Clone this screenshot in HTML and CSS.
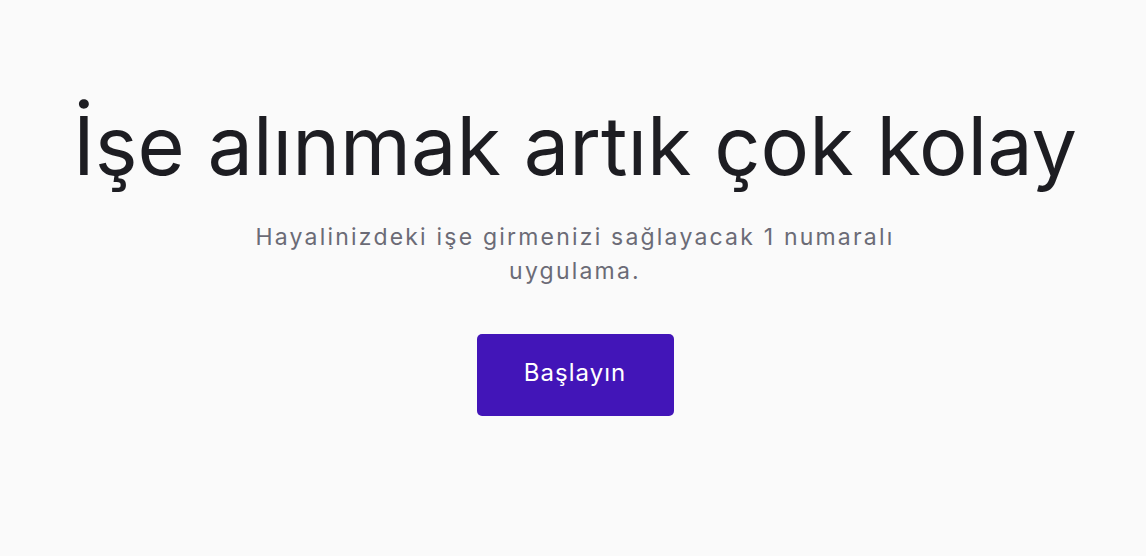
FILE: index.html
```html
<!DOCTYPE html>
<html lang="tr">
<head>
<meta charset="utf-8">
<link rel="stylesheet" href="styles.css">
</head>
<body>
<main class="hero">
  <h1 class="hero-title">İşe alınmak artık çok kolay</h1>
  <p class="hero-sub">Hayalinizdeki işe girmenizi sağlayacak 1 numaralı uygulama.</p>
  <a class="hero-btn" href="#">Başlayın</a>
</main>
</body>
</html>
```
FILE: styles.css
```css
html, body {
  margin: 0;
  padding: 0;
  background: #fafafa;
  height: 100%;
}
body {
  font-family: "Inter", "Open Sans", sans-serif;
}
.hero {
  display: flex;
  flex-direction: column;
  align-items: center;
  padding: 100px 0 0 4px;
}
.hero-title {
  margin: 0;
  font-size: 81px;
  line-height: 92px;
  font-weight: 400;
  color: #1d1d22;
  letter-spacing: 0;
}
.hero-sub {
  margin: 28px 0 0;
  max-width: 700px;
  text-align: center;
  font-size: 23px;
  line-height: 34px;
  color: #6b6b76;
  letter-spacing: 2.2px;
}
.hero-btn {
  margin-top: 46px;
  display: flex;
  align-items: center;
  justify-content: center;
  width: 197px;
  height: 82px;
  padding-bottom: 6px;
  box-sizing: border-box;
  background: #4215b8;
  color: #ffffff;
  border-radius: 5px;
  text-decoration: none;
  font-size: 24px;
  letter-spacing: 1px;
}
```
